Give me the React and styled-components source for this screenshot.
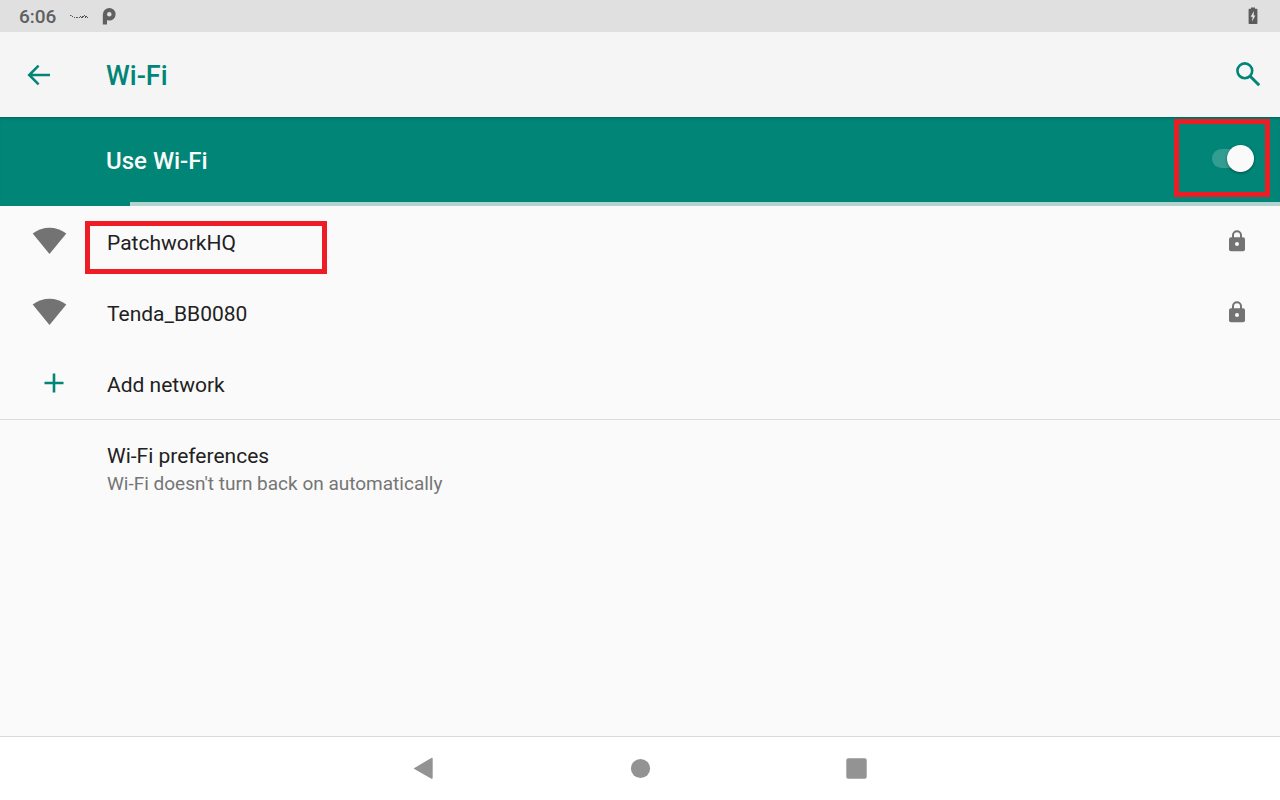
import React, { useState } from 'react'
import styled, { createGlobalStyle } from 'styled-components'

const GlobalStyle = createGlobalStyle`
  * {
    box-sizing: border-box;
  }
  body {
    margin: 0;
    background: #fafafa;
    font-family: Roboto, sans-serif;
  }
`;

const networks = ['PatchworkHQ', 'Tenda_BB0080'];

const App = () => {
  const [wifiOn, setWifiOn] = useState(true);

  return (
    <Screen>
      <GlobalStyle />
      <StatusBar>
        <Clock>6:06</Clock>
        <ScribbleIcon />
        <ParkingIcon />
        <Spacer />
        <BatteryIcon />
      </StatusBar>

      <AppBar>
        <IconButton aria-label="Back"><BackIcon /></IconButton>
        <Title>Wi-Fi</Title>
        <IconButton aria-label="Search"><SearchIcon /></IconButton>
      </AppBar>

      <Banner>
        <BannerLabel htmlFor="wifi">Use Wi-Fi</BannerLabel>
        <SwitchArea>
          <Switch id="wifi" type="checkbox" checked={wifiOn} onChange={() => setWifiOn(!wifiOn)} />
          <SwitchMark />
        </SwitchArea>
      </Banner>
      <Progress><ProgressGap /></Progress>

      <Main>
        <List>
          {networks.map((name, i) => (
            <li key={name}>
              <Row>
                <Lead><SignalIcon /></Lead>
                <RowText>{name}</RowText>
                <LockIcon />
                {i === 0 && <NetworkMark />}
              </Row>
            </li>
          ))}
          <li>
            <Row>
              <Lead $wide><PlusIcon /></Lead>
              <RowText>Add network</RowText>
            </Row>
          </li>
        </List>
        <Preferences>
          <RowText>Wi-Fi preferences</RowText>
          <Summary>Wi-Fi doesn't turn back on automatically</Summary>
        </Preferences>
      </Main>

      <NavBar>
        <IconButton aria-label="Back">
          <svg width="24" height="24" viewBox="0 0 24 24">
            <path d="M2.4 10.9L18.9 1.2Q20.7 .3 20.7 1.8V20.8Q20.7 22.4 18.9 21.5L2.4 12Q1.4 11.4 2.4 10.9Z" fill="#939393" />
          </svg>
        </IconButton>
        <IconButton aria-label="Home">
          <svg width="24" height="24" viewBox="0 0 24 24">
            <circle cx="12.5" cy="11.5" r="9.6" fill="#939393" />
          </svg>
        </IconButton>
        <IconButton aria-label="Recent apps">
          <svg width="24" height="24" viewBox="0 0 24 24">
            <rect x="2.3" y="1.3" width="20.4" height="20.4" rx="2" fill="#939393" />
          </svg>
        </IconButton>
      </NavBar>
    </Screen>
  )
}

export default App;

const ScribbleIcon = () => (
  <svg width="20" height="6" viewBox="0 0 20 6" fill="none" stroke="#555" strokeWidth="1">
    <path d="M1 2.5h1.5M3 3.5h1M5 4.5h1M7 4.5h2M10 4.5h1M11 3.5h1M12 4.5h2M13 3.5h2M16 4.5h1M15 2.5h1M16 3.5h2M18 4.5h1" />
  </svg>
)

const ParkingIcon = () => (
  <svg width="14" height="18" viewBox="0 0 14 18" fill="none" stroke="#606060">
    <circle cx="7.3" cy="7.3" r="4.3" strokeWidth="4" />
    <path d="M2.9 7V17.5" strokeWidth="4.2" />
  </svg>
)

const BatteryIcon = () => (
  <svg width="10" height="18" viewBox="0 0 10 18">
    <path d="M3 .4h4v1.4h1.7q.7 0 .7.7v13.8q0 .7-.7.7H1.3q-.7 0-.7-.7V2.5q0-.7.7-.7H3z" fill="#5c5c5c" />
    <path d="M6 4L2.6 9.8h2L4 14.4 7.4 8.4H5.6z" fill="#e8e8e8" />
  </svg>
)

const BackIcon = () => (
  <svg width="24" height="24" viewBox="0 0 24 24" fill="none" stroke="#008577" strokeWidth="2.5">
    <path d="M23 12H2.5M11.6 2.6L2.2 12L11.6 21.4" strokeLinecap="butt" />
  </svg>
)

const SearchIcon = () => (
  <svg width="26" height="28" viewBox="0 0 26 28" fill="none" stroke="#008577">
    <circle cx="9.8" cy="9.8" r="7.4" strokeWidth="2.6" />
    <path d="M15.2 15.2L24.2 24.2" strokeWidth="3" />
  </svg>
)

const SignalIcon = () => (
  <svg width="36" height="30" viewBox="0 0 36 30">
    <path d="M.7 6.4Q8.5.7 17.5.7T34.3 6.4L17.5 27Z" fill="#737373" />
  </svg>
)

const PlusIcon = () => (
  <svg width="20" height="22" viewBox="0 0 20 22" fill="none" stroke="#008577" strokeWidth="2.6">
    <path d="M10 .5V19.5M.5 10H19.5" />
  </svg>
)

const LockIcon = () => (
  <svg width="16" height="24" viewBox="0 0 16 24">
    <path d="M4 8V5.2a4 4 0 0 1 8 0V8" fill="none" stroke="#737373" strokeWidth="2" />
    <rect y="7.2" width="16" height="14" rx="2" fill="#737373" />
    <circle cx="8" cy="14.1" r="2" fill="#fafafa" />
  </svg>
)

const Screen = styled.div`
  display: flex;
  flex-direction: column;
  min-height: 100vh;
`;

const StatusBar = styled.div`
  display: flex;
  align-items: center;
  height: 32px;
  padding: 0 22px 0 19px;
  gap: 13px;
  background: #e0e0e0;
`;

const Clock = styled.span`
  font-size: 19px;
  font-weight: 500;
  color: #5f5f5f;
`;

const Spacer = styled.div`
  flex: 1;
`;

const AppBar = styled.header`
  display: flex;
  align-items: center;
  height: 85px;
  padding: 0 19px 0 27px;
  background: #f5f5f5;
`;

const IconButton = styled.button`
  display: flex;
  padding: 0;
  border: none;
  background: none;
  cursor: pointer;
`;

const Title = styled.h1`
  flex: 1;
  margin: 0;
  padding: 2px 0 0 55px;
  font-size: 27px;
  font-weight: 500;
  color: #008577;
`;

const Banner = styled.div`
  display: flex;
  align-items: center;
  justify-content: space-between;
  height: 85px;
  padding: 0 26px 0 106px;
  background: #008577;
  box-shadow: inset 0 3px 3px -2px rgba(0, 0, 0, 0.25);
`;

const BannerLabel = styled.label`
  padding-top: 2px;
  font-size: 24px;
  font-weight: 500;
  color: #fafafa;
`;

const SwitchArea = styled.div`
  position: relative;
  display: flex;
  padding-bottom: 2px;
`;

const Switch = styled.input`
  appearance: none;
  position: relative;
  display: flex;
  align-items: center;
  justify-content: ${p => (p.checked ? 'flex-end' : 'flex-start')};
  width: 42px;
  height: 27px;
  margin: 0;
  cursor: pointer;

  /* track */
  &::after {
    content: '';
    position: absolute;
    top: 4px;
    left: 0;
    width: 100%;
    height: 19px;
    border-radius: 10px;
    background: rgba(255, 255, 255, 0.2);
  }

  /* thumb */
  &::before {
    content: '';
    z-index: 1;
    width: 27px;
    height: 27px;
    border-radius: 50%;
    background: #fafafa;
    box-shadow: 0 1px 3px rgba(0, 0, 0, 0.4);
  }
`;

const Mark = styled.div`
  position: absolute;
  border: 5px solid #ee1c25;
  pointer-events: none;
`;

const SwitchMark = styled(Mark)`
  top: -26px;
  right: -16px;
  width: 96px;
  height: 78px;
`;

const NetworkMark = styled(Mark)`
  top: 15px;
  left: 85px;
  width: 242px;
  height: 53px;
`;

const Progress = styled.div`
  display: flex;
  height: 4px;
  padding-left: 130px;
  background: #008577;
`;

const ProgressGap = styled.div`
  flex: 1;
  background: #b2d3cf;
`;

const Main = styled.main`
  flex: 1;
`;

const List = styled.ul`
  margin: 0;
  padding: 0;
  list-style: none;
  border-bottom: 1px solid #dadada;
`;

const Row = styled.button`
  position: relative;
  display: flex;
  align-items: center;
  width: 100%;
  height: 71px;
  padding: 0 35px 0 0;
  border: none;
  background: none;
  font-family: inherit;
  text-align: left;
  cursor: pointer;
`;

const Lead = styled.span`
  display: flex;
  width: 107px;
  padding-left: ${p => (p.$wide ? '44px' : '32px')};
`;

const RowText = styled.span`
  flex: 1;
  padding-top: 2px;
  font-size: 21px;
  line-height: 28px;
  color: #212121;
`;

const Preferences = styled.button`
  display: flex;
  flex-direction: column;
  width: 100%;
  padding: 20px 35px 20px 107px;
  border: none;
  background: none;
  font-family: inherit;
  text-align: left;
  cursor: pointer;
`;

const Summary = styled.span`
  font-size: 19px;
  line-height: 28px;
  color: #757575;
`;

const NavBar = styled.nav`
  display: flex;
  align-items: center;
  justify-content: center;
  gap: 192px;
  height: 64px;
  border-top: 1px solid #dadada;
  background: #fff;
`;
